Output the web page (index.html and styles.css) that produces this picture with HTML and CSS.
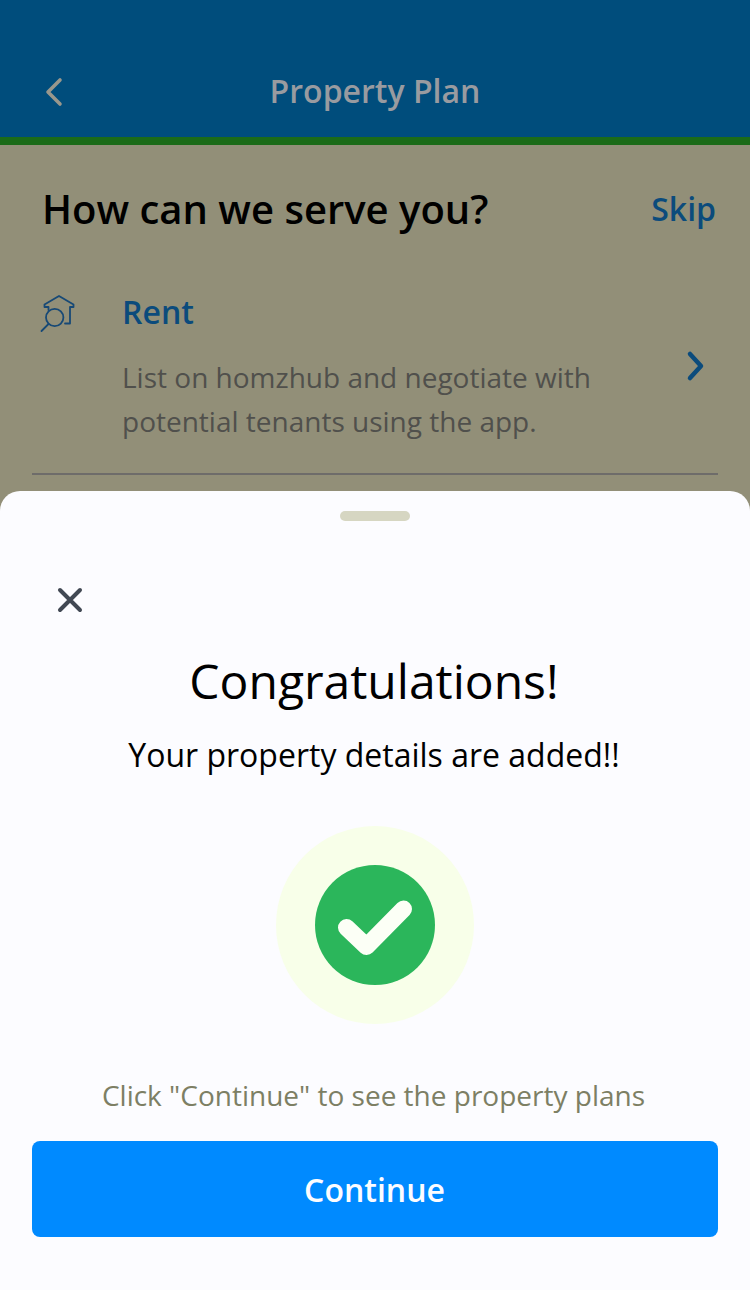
FILE: index.html
```html
<!DOCTYPE html>
<html lang="en">
<head>
<meta charset="utf-8">
<title>Property Plan</title>
<link rel="stylesheet" href="styles.css">
</head>
<body>
<div class="screen">
  <header class="header">
    <svg class="back" viewBox="0 0 20 30"><path d="M16 3 4 15l12 12"/></svg>
    <h1 class="header-title">Property Plan</h1>
  </header>
  <div class="progress"></div>
  <main class="plans">
    <div class="plans-head">
      <h2 class="question">How can we serve you?</h2>
      <a class="skip">Skip</a>
    </div>
    <section class="plan">
      <svg class="house" viewBox="0 0 36 40"><path d="M8.500 17V14H4.500V11.500L19 3 33.500 11.500V14H30V30.500H25"/><circle cx="14.700" cy="24.500" r="8.700"/><path d="M8.500 31 1.500 38"/></svg>
      <div class="plan-copy">
        <h3 class="plan-name">Rent</h3>
        <p class="plan-text">List on homzhub and negotiate with<br>potential tenants using the app.</p>
      </div>
      <svg class="forward" viewBox="0 0 20 32"><path d="M4 4 15 16 4 28"/></svg>
    </section>
  </main>
  <section class="sheet">
    <div class="handle"></div>
    <svg class="close" viewBox="0 0 26 26"><path d="m3 3 20 20M23 3 3 23"/></svg>
    <h2 class="congrats">Congratulations!</h2>
    <p class="message">Your property details are added!!</p>
    <svg class="success" viewBox="0 0 198 198"><circle class="halo" cx="99" cy="99" r="99"/><circle class="disc" cx="99" cy="99" r="60"/><path d="M70.500 101.500 90.500 120.500 127.500 83"/></svg>
    <p class="hint">Click "Continue" to see the property plans</p>
    <button class="continue">Continue</button>
  </section>
</div>
</body>
</html>
```
FILE: styles.css
```css
* { box-sizing: border-box; }
body { margin: 0; font-family: "Open Sans", sans-serif; }
h1, h2, h3, p { margin: 0; }
svg { fill: none; stroke-linecap: round; stroke-linejoin: round; }
.screen { width: 750px; height: 1290px; display: flex; flex-direction: column; overflow: hidden; background: #928f78; }
.header { height: 137px; padding: 46px 44px 0; display: grid; grid-template-columns: 20px 1fr 20px; align-items: center; background: #004d7c; }
.back { width: 20px; height: 30px; stroke: #99978c; stroke-width: 3.600; }
.header-title { padding-bottom: 2px; text-align: center; font-size: 32px; line-height: 44px; font-weight: 600; color: #999ba0; }
.progress { height: 8px; background: #1b6b18; }
.plans { height: 346px; padding: 36px 32px 0; }
.plans-head { display: flex; justify-content: space-between; align-items: center; height: 56px; padding: 0 2px 0 10px; }
.question { font-size: 40px; line-height: 56px; font-weight: 600; color: #000; }
.skip { font-size: 32px; line-height: 44px; font-weight: 600; color: #0b4b7c; }
.plan { display: flex; height: 238px; padding: 53px 12px 0 8px; border-bottom: 2px solid #6e6c6a; }
.house { width: 36px; height: 40px; margin-top: 3px; stroke: #174976; stroke-width: 1.8; }
.plan-copy { flex: 1; margin-left: 46px; }
.plan-name { font-size: 32px; line-height: 44px; font-weight: 600; color: #0b4b7c; }
.plan-text { margin-top: 21px; font-size: 28px; line-height: 44px; color: #50504c; }
.forward { width: 20px; height: 32px; margin-top: 60px; stroke: #0b4b7c; stroke-width: 4.500; }
.sheet { flex: 1; padding: 20px 32px 0; display: flex; flex-direction: column; align-items: center; border-radius: 20px 20px 0 0; background: #fcfcff; }
.handle { width: 70px; height: 10px; border-radius: 5px; background: #d6d6c2; }
.close { width: 26px; height: 26px; margin: 66px 0 0 25px; align-self: flex-start; stroke: #414853; stroke-width: 4; }
.congrats { margin-top: 35px; padding-right: 2px; font-size: 48px; line-height: 66px; font-weight: 400; color: #000; }
.message { margin-top: 19px; padding-right: 2px; font-size: 32px; line-height: 44px; color: #000; }
.success { width: 198px; height: 198px; margin-top: 49px; stroke: #fcfff6; stroke-width: 17; }
.halo { fill: #f8ffe9; stroke: none; }
.disc { fill: #2bb65b; stroke: none; }
.hint { margin-top: 51px; padding-right: 3px; font-size: 28px; line-height: 40px; color: #7d7f64; }
.continue { width: 686px; height: 96px; margin-top: 26px; padding: 2px 1px 0 0; border: 0; border-radius: 8px; background: #008aff; color: #fcfcff; font: 600 32px/44px "Open Sans", sans-serif; }
```
